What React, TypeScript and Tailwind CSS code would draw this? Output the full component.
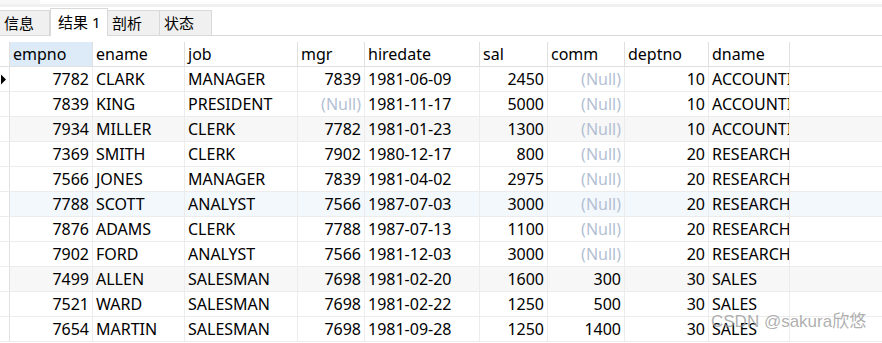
import React from "react";

interface Emp {
    empno: string;
    ename: string;
    job: string;
    mgr: string | null;
    hiredate: string;
    sal: string;
    comm: string | null;
    deptno: string;
    dname: string;
    bg?: string;
}

const rows: Emp[] = [
    { empno: "7782", ename: "CLARK", job: "MANAGER", mgr: "7839", hiredate: "1981-06-09", sal: "2450", comm: null, deptno: "10", dname: "ACCOUNTING" },
    { empno: "7839", ename: "KING", job: "PRESIDENT", mgr: null, hiredate: "1981-11-17", sal: "5000", comm: null, deptno: "10", dname: "ACCOUNTING" },
    { empno: "7934", ename: "MILLER", job: "CLERK", mgr: "7782", hiredate: "1981-01-23", sal: "1300", comm: null, deptno: "10", dname: "ACCOUNTING", bg: "bg-[#f7f7f7]" },
    { empno: "7369", ename: "SMITH", job: "CLERK", mgr: "7902", hiredate: "1980-12-17", sal: "800", comm: null, deptno: "20", dname: "RESEARCH" },
    { empno: "7566", ename: "JONES", job: "MANAGER", mgr: "7839", hiredate: "1981-04-02", sal: "2975", comm: null, deptno: "20", dname: "RESEARCH" },
    { empno: "7788", ename: "SCOTT", job: "ANALYST", mgr: "7566", hiredate: "1987-07-03", sal: "3000", comm: null, deptno: "20", dname: "RESEARCH", bg: "bg-[#f3f8fd]" },
    { empno: "7876", ename: "ADAMS", job: "CLERK", mgr: "7788", hiredate: "1987-07-13", sal: "1100", comm: null, deptno: "20", dname: "RESEARCH" },
    { empno: "7902", ename: "FORD", job: "ANALYST", mgr: "7566", hiredate: "1981-12-03", sal: "3000", comm: null, deptno: "20", dname: "RESEARCH" },
    { empno: "7499", ename: "ALLEN", job: "SALESMAN", mgr: "7698", hiredate: "1981-02-20", sal: "1600", comm: "300", deptno: "30", dname: "SALES", bg: "bg-[#f7f7f7]" },
    { empno: "7521", ename: "WARD", job: "SALESMAN", mgr: "7698", hiredate: "1981-02-22", sal: "1250", comm: "500", deptno: "30", dname: "SALES" },
    { empno: "7654", ename: "MARTIN", job: "SALESMAN", mgr: "7698", hiredate: "1981-09-28", sal: "1250", comm: "1400", deptno: "30", dname: "SALES" },
];

const cols = [
    { key: "empno", w: "w-[83px]", right: true },
    { key: "ename", w: "w-[92px]", right: false },
    { key: "job", w: "w-[113px]", right: false },
    { key: "mgr", w: "w-[67px]", right: true },
    { key: "hiredate", w: "w-[115px]", right: false },
    { key: "sal", w: "w-[68px]", right: true },
    { key: "comm", w: "w-[77px]", right: true },
    { key: "deptno", w: "w-[84px]", right: true },
    { key: "dname", w: "w-[81px]", right: false },
] as const;

const tabs = ["信息", "结果 1", "剖析", "状态"];

export default function App() {
    return (
        <div className="relative w-[882px] h-[343px] overflow-hidden bg-white text-black font-['Noto_Sans','Noto_Sans_CJK_SC',sans-serif]">
            <div className="flex h-[4px]">
                <div className="w-[40px] bg-[#f7f7f7]" />
            </div>
            <div className="h-[3px] bg-[#f0f0f0]" />
            <div className="relative flex h-[29px] items-end border-b border-[#d9d9d9] pt-[1px]">
                {tabs.map((t, i) =>
                    i === 1 ? (
                        <div key={t} className="relative -mb-px flex h-[28px] w-[58px] items-center border-x border-t border-[#d9d9d9] bg-white pl-[7px] text-[15px] leading-none">
                            {t}
                        </div>
                    ) : (
                        <div key={t} className={`flex h-[25px] items-center border-t border-r border-[#d9d9d9] bg-[#f0f0f0] text-[15px] leading-none ${i === 0 ? "w-[50px] pl-[4px]" : "w-[52px] pl-[4px]"} ${i === 2 ? "border-l-0" : ""}`}>
                            {t}
                        </div>
                    )
                )}
            </div>
            <div className="h-[6px]" />
            <div className="flex h-[25px] border-b border-[#e0e0e0] text-[16px]">
                <div className="w-[10px] border-r border-[#e0e0e0]" />
                {cols.map((c, i) => (
                    <div key={c.key} className={`${c.w} flex items-center border-r border-[#e0e0e0] pl-[3px] ${i === 0 ? "bg-[#dcebf7]" : ""}`}>
                        {c.key}
                    </div>
                ))}
            </div>
            {rows.map((r, ri) => (
                <div key={r.empno} className={`flex h-[25px] border-b border-[#ececec] text-[16px] ${r.bg ?? ""}`}>
                    <div className="flex w-[10px] items-center border-r border-[#e0e0e0] bg-white">
                        {ri === 0 && (
                            <svg width="7" height="11" viewBox="0 0 7 11">
                                <path d="M1 0.5 L6 5.5 L1 10.5 Z" fill="#000" />
                            </svg>
                        )}
                    </div>
                    {cols.map((c) => {
                        const v = r[c.key];
                        return (
                            <div key={c.key} className={`${c.w} flex items-center overflow-hidden whitespace-nowrap border-r border-[#ececec] ${c.right ? "justify-end pr-[3px]" : "pl-[3px]"}`}>
                                {v === null ? <span className="text-[#b3bfd3]">(Null)</span> : v}
                            </div>
                        );
                    })}
                </div>
            ))}
            <div className="absolute left-[711px] top-[309px] text-[17px] text-[#9a9a9a]/80 font-['Liberation_Sans','Noto_Sans_CJK_SC',sans-serif]">
                CSDN @sakura欣悠
            </div>
        </div>
    );
}
